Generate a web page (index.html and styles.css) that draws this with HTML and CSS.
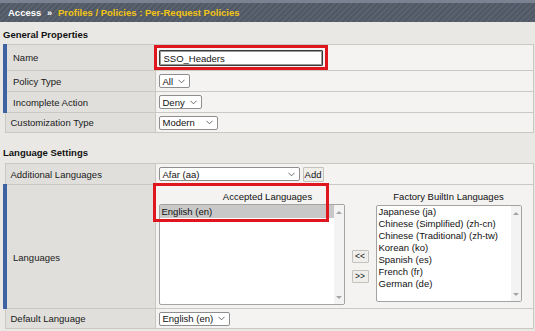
FILE: index.html
```html
<!DOCTYPE html>
<html lang="en">
<head>
  <meta charset="UTF-8" />
  <title>Per-Request Policies</title>
  <link rel="stylesheet" href="styles.css">
</head>
<body>

<!-- TOP BAR -->
<div class="topbar">
  <span class="crumb-root">Access</span>
  <span class="crumb-sep">&rsaquo;&rsaquo;</span>
  <span class="crumb-path">Profiles / Policies : Per-Request Policies</span>
</div>

<div class="content">

  <!-- GENERAL PROPERTIES -->
  <h2 class="section">General Properties</h2>
  <table class="props">
    <colgroup><col class="col-label"><col></colgroup>
    <tr class="row-name">
      <td class="label required">Name</td>
      <td class="value value-name">
        <span class="mark-box"><input class="text-input" type="text" value="SSO_Headers" /></span>
      </td>
    </tr>
    <tr>
      <td class="label required">Policy Type</td>
      <td class="value">
        <span class="select w-all">All<svg class="chev" viewBox="0 0 8 5"><path d="M0.5 0.5 L4 4 L7.5 0.5"/></svg></span>
      </td>
    </tr>
    <tr>
      <td class="label required">Incomplete Action</td>
      <td class="value">
        <span class="select w-deny">Deny<svg class="chev" viewBox="0 0 8 5"><path d="M0.5 0.5 L4 4 L7.5 0.5"/></svg></span>
      </td>
    </tr>
    <tr class="row-last">
      <td class="label">Customization Type</td>
      <td class="value">
        <span class="select w-modern">Modern<svg class="chev" viewBox="0 0 8 5"><path d="M0.5 0.5 L4 4 L7.5 0.5"/></svg></span>
      </td>
    </tr>
  </table>

  <!-- LANGUAGE SETTINGS -->
  <h2 class="section section-lang">Language Settings</h2>
  <table class="props">
    <colgroup><col class="col-label"><col></colgroup>
    <tr>
      <td class="label">Additional Languages</td>
      <td class="value">
        <div class="inline-row">
          <span class="select w-afar">Afar (aa)<svg class="chev" viewBox="0 0 8 5"><path d="M0.5 0.5 L4 4 L7.5 0.5"/></svg></span>
          <button class="btn btn-add">Add</button>
        </div>
      </td>
    </tr>
    <tr>
      <td class="label required label-languages">Languages</td>
      <td class="value value-languages">
        <div class="lang-wrap">
          <div class="lang-col">
            <div class="lang-head lang-head-left">Accepted Languages</div>
            <div class="listbox list-left">
              <div class="list-items">
                <div class="item selected">English (en)</div>
              </div>
              <div class="scroll"><span class="arr-up"></span><span class="arr-down"></span></div>
            </div>
          </div>
          <div class="move-col">
            <button class="btn btn-move">&lt;&lt;</button>
            <button class="btn btn-move">&gt;&gt;</button>
          </div>
          <div class="lang-col">
            <div class="lang-head">Factory BuiltIn Languages</div>
            <div class="listbox list-right">
              <div class="list-items">
                <div class="item">Japanese (ja)</div>
                <div class="item">Chinese (Simplified) (zh-cn)</div>
                <div class="item">Chinese (Traditional) (zh-tw)</div>
                <div class="item">Korean (ko)</div>
                <div class="item">Spanish (es)</div>
                <div class="item">French (fr)</div>
                <div class="item">German (de)</div>
              </div>
              <div class="scroll"><span class="arr-up"></span><span class="arr-down"></span></div>
            </div>
          </div>
          <div class="mark-lang"></div>
        </div>
      </td>
    </tr>
    <tr class="row-last">
      <td class="label">Default Language</td>
      <td class="value">
        <span class="select w-default">English (en)<svg class="chev" viewBox="0 0 8 5"><path d="M0.5 0.5 L4 4 L7.5 0.5"/></svg></span>
      </td>
    </tr>
  </table>

</div>
</body>
</html>
```

FILE: styles.css
```css
body, html {
  margin: 0;
  padding: 0;
  font-family: 'Liberation Sans', Arial, sans-serif;
  font-size: 9.5px;
  background: #e9e8e4;
  color: #1a1a1a;
  overflow: hidden;
}

/* top bar */
.topbar {
  height: 19px;
  line-height: 19px;
  border-top: 3px solid #7b8392;
  background: #545c69 repeating-linear-gradient(135deg, rgba(255,255,255,0.04) 0 2px, rgba(0,0,0,0.04) 2px 4px);
  padding-left: 8px;
  font-weight: bold;
  white-space: nowrap;
}

.crumb-root { color: #fff; }
.crumb-sep { color: #fff; margin: 0 4px 0 3px; letter-spacing: -1px; }
.crumb-path { color: #f2c514; }

.content {
  padding: 0 1px 0 3px;
}

.section {
  margin: 0 0 2px 0;
  padding-top: 6px;
  font-size: 9.5px;
  line-height: 14px;
  font-weight: bold;
  color: #111;
}

.section-lang {
  padding-top: 13px;
  margin-bottom: 3px;
}

/* property tables */
.props {
  width: 100%;
  table-layout: fixed;
  border-collapse: collapse;
  border: 1px solid #cac8c3;
}

.col-label { width: 150px; }

.props td {
  border: 1px solid #cac8c3;
  height: 20px;
  padding: 0;
  vertical-align: middle;
}

.props .label {
  background: #e0dfdb;
  padding-left: 5px;
  color: #1a1a1a;
  white-space: nowrap;
}

.props .label.required {
  border-left: 4px solid #3e62a2;
  padding-left: 6px;
}

.props .value {
  background: #f4f3f1;
  padding-left: 3px;
}

.props .row-name td { height: 23px; }
.props .row-last td { height: 19px; }

.props .value-name { padding-left: 0; }

.mark-box {
  display: inline-block;
  border: 3px solid #e0161e;
  padding: 2px 2px 1px 2px;
  margin: 0 0 0 -2px;
  vertical-align: middle;
}

.text-input {
  display: block;
  width: 164px;
  height: 16px;
  box-sizing: border-box;
  margin: 0;
  padding: 0 0 0 4px;
  border: 1px solid #3a3a3a;
  border-radius: 1px;
  box-shadow: inset 0 0 0 1px #9a9a9a;
  font-family: inherit;
  font-size: 9.5px;
  color: #111;
  background: #fff;
  outline: none;
}

/* fake selects */
.select {
  display: inline-flex;
  align-items: center;
  justify-content: space-between;
  box-sizing: border-box;
  height: 14px;
  padding: 0 4px 0 3px;
  border: 1px solid #8e8e8e;
  border-radius: 2px;
  background: #fff;
  color: #111;
  vertical-align: middle;
}

.chev {
  width: 7px;
  height: 5px;
  fill: none;
  stroke: #444;
  stroke-width: 0.9;
}

.w-all { width: 31px; }
.w-deny { width: 43px; }
.w-modern { width: 59px; }
.w-afar { width: 141px; }
.w-default { width: 71px; }

.inline-row {
  display: flex;
  align-items: center;
  gap: 3px;
}

.btn {
  font-family: inherit;
  font-size: 9.5px;
  color: #111;
  background: #efeeeb;
  border: 1px solid #c4c2bd;
  border-radius: 1px;
  padding: 0;
  cursor: pointer;
}

.btn-add {
  width: 21px;
  height: 15px;
}

/* languages */
.props .label-languages {
  vertical-align: top;
  padding-top: 67px;
}

.props .value-languages {
  padding: 5px 0 3px 3px;
}

.lang-wrap {
  position: relative;
  display: flex;
  align-items: flex-start;
}

.lang-col {
  display: flex;
  flex-direction: column;
}

.lang-head {
  height: 14px;
  line-height: 14px;
  text-align: center;
  color: #111;
}

.lang-head-left { padding-left: 32px; }

.listbox {
  display: flex;
  box-sizing: border-box;
  background: #fff;
  border: 1px solid #a3a3a3;
  border-radius: 2px;
  overflow: hidden;
}

.list-left { width: 186px; height: 101px; }
.list-right { width: 146px; height: 97px; margin-top: 1px; }

.list-items {
  flex: 1;
}

.item {
  line-height: 12px;
  padding-left: 2px;
  white-space: nowrap;
  color: #111;
}

.item.selected {
  background: #c8c8c8;
  line-height: 13px;
}

.scroll {
  width: 10px;
  background: #f3f3f3;
  display: flex;
  flex-direction: column;
  justify-content: space-between;
  align-items: center;
  padding: 6px 0 5px;
}

.arr-up, .arr-down {
  width: 0;
  height: 0;
  border-left: 3px solid transparent;
  border-right: 3px solid transparent;
}

.arr-up { border-bottom: 3px solid #a5a5a5; }
.arr-down { border-top: 3px solid #a5a5a5; }

.move-col {
  width: 31px;
  flex-shrink: 0;
  display: flex;
  flex-direction: column;
  align-items: center;
  gap: 7px;
  padding-top: 60px;
}

.btn-move {
  width: 17px;
  height: 13px;
  font-size: 8.5px;
  line-height: 11px;
}

.mark-lang {
  position: absolute;
  left: -6px;
  top: -7px;
  width: 170px;
  height: 33px;
  border: 3px solid #e0161e;
}
```
